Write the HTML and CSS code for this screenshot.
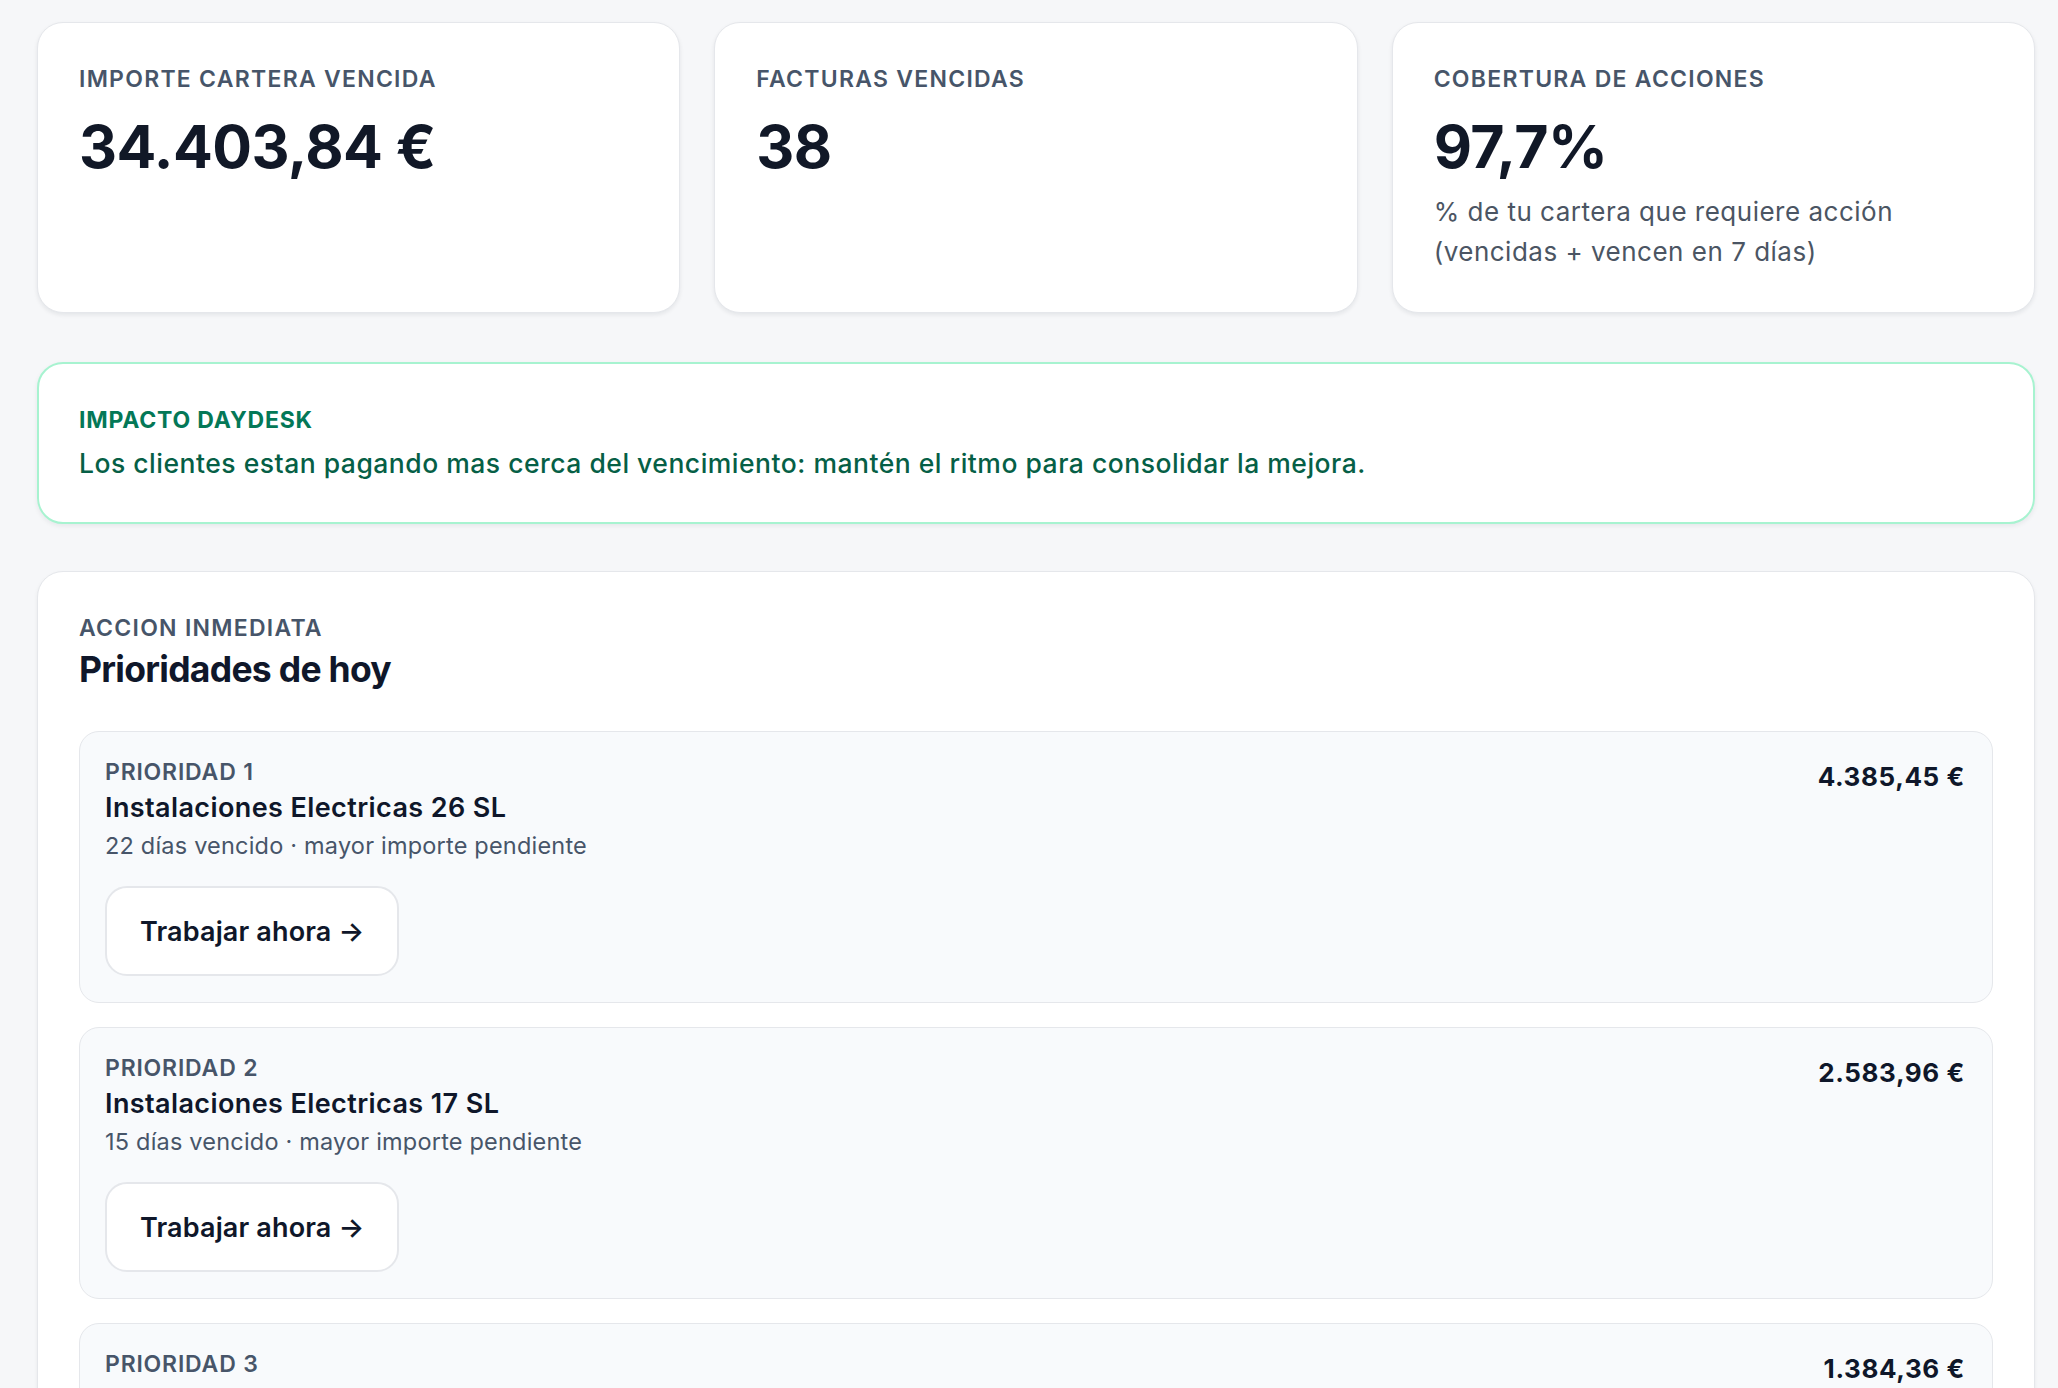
FILE: index.html
```html
<!DOCTYPE html>
<html lang="es">
<head>
<meta charset="utf-8">
<title>Cartera</title>
<link rel="stylesheet" href="styles.css">
</head>
<body>
<main class="page">
  <section class="stats">
    <div class="stat-card">
      <div class="label">Importe cartera vencida</div>
      <div class="value">34.403,84 €</div>
    </div>
    <div class="stat-card">
      <div class="label">Facturas vencidas</div>
      <div class="value">38</div>
    </div>
    <div class="stat-card">
      <div class="label">Cobertura de acciones</div>
      <div class="value">97,7%</div>
      <p class="desc">% de tu cartera que requiere acción<br>(vencidas + vencen en 7 días)</p>
    </div>
  </section>

  <section class="impact">
    <div class="impact-label">Impacto Daydesk</div>
    <p class="impact-text">Los clientes estan pagando mas cerca del vencimiento: mantén el ritmo para consolidar la mejora.</p>
  </section>

  <section class="panel">
    <div class="label">Accion inmediata</div>
    <h2 class="panel-title">Prioridades de hoy</h2>
    <div class="list">
      <article class="item">
        <div class="item-main">
          <div class="item-label">Prioridad 1</div>
          <div class="item-name">Instalaciones Electricas 26 SL</div>
          <div class="item-sub">22 días vencido · mayor importe pendiente</div>
          <button class="btn">Trabajar ahora →</button>
        </div>
        <div class="amount">4.385,45 €</div>
      </article>
      <article class="item">
        <div class="item-main">
          <div class="item-label">Prioridad 2</div>
          <div class="item-name">Instalaciones Electricas 17 SL</div>
          <div class="item-sub">15 días vencido · mayor importe pendiente</div>
          <button class="btn">Trabajar ahora →</button>
        </div>
        <div class="amount">2.583,96 €</div>
      </article>
      <article class="item">
        <div class="item-main">
          <div class="item-label">Prioridad 3</div>
          <div class="item-name">Instalaciones Electricas 12 SL</div>
          <div class="item-sub">9 días vencido · mayor importe pendiente</div>
          <button class="btn">Trabajar ahora →</button>
        </div>
        <div class="amount">1.384,36 €</div>
      </article>
    </div>
  </section>
</main>
</body>
</html>
```

FILE: styles.css
```css
* { box-sizing: border-box; }

body {
  margin: 0;
  background: #f6f7f9;
  font-family: Inter, "Noto Sans", "Liberation Sans", sans-serif;
  color: #0f172a;
}

.page {
  padding: 22px 23px 60px 37px;
  display: flex;
  flex-direction: column;
}

.stats {
  display: grid;
  grid-template-columns: repeat(3, 1fr);
  gap: 34px;
}

.stat-card {
  background: #ffffff;
  border: 1.5px solid #e5e7eb;
  border-radius: 26px;
  padding: 42px 41px 40px;
  box-shadow: 0 2px 4px rgba(15, 23, 42, 0.08);
}

.label {
  font-size: 23px;
  font-weight: 600;
  letter-spacing: 0.055em;
  text-transform: uppercase;
  color: #475569;
  line-height: 28px;
}

.value {
  margin-top: 18px;
  font-size: 59px;
  font-weight: 700;
  letter-spacing: -0.01em;
  line-height: 71px;
  color: #111827;
}

.desc {
  margin: 10px 0 0;
  font-size: 26px;
  line-height: 40px;
  letter-spacing: 0.5px;
  color: #4b5563;
}

.impact {
  margin-top: 49px;
  background: #ffffff;
  border: 2px solid #a7f3d0;
  border-radius: 26px;
  padding: 42px 40px 39px;
  box-shadow: 0 2px 5px rgba(15, 23, 42, 0.07);
}

.impact-label {
  font-size: 23px;
  font-weight: 700;
  letter-spacing: 0.035em;
  text-transform: uppercase;
  color: #047857;
  line-height: 28px;
}

.impact-text {
  margin: 10px 0 0;
  font-size: 26.5px;
  font-weight: 500;
  letter-spacing: 0.5px;
  line-height: 39px;
  color: #065f46;
}

.panel {
  margin-top: 47px;
  background: #ffffff;
  border: 1.5px solid #e5e7eb;
  border-radius: 26px;
  padding: 42px 41px 41px;
  box-shadow: 0 2px 4px rgba(15, 23, 42, 0.06);
}

.panel-title {
  margin: 6px 0 0;
  font-size: 35.5px;
  font-weight: 700;
  letter-spacing: -0.02em;
  line-height: 44px;
  color: #0f172a;
}

.list {
  margin-top: 39px;
  display: flex;
  flex-direction: column;
  gap: 24px;
}

.item {
  display: flex;
  justify-content: space-between;
  align-items: flex-start;
  background: #f8fafc;
  border: 1.5px solid #e5e7eb;
  border-radius: 20px;
  padding: 26px 27px 26px 25px;
}

.item-main {
  display: flex;
  flex-direction: column;
  align-items: flex-start;
}

.item-label {
  font-size: 23px;
  font-weight: 600;
  letter-spacing: 0.035em;
  text-transform: uppercase;
  color: #475569;
  line-height: 28px;
}

.item-name {
  margin-top: 5px;
  font-size: 27px;
  font-weight: 600;
  letter-spacing: 0.4px;
  line-height: 33px;
  color: #0f172a;
}

.item-sub {
  margin-top: 4px;
  font-size: 23.5px;
  letter-spacing: 0.2px;
  line-height: 35px;
  color: #475569;
}

.btn {
  margin-top: 23px;
  height: 90px;
  padding: 0 33px;
  background: #ffffff;
  border: 2px solid #e5e7eb;
  border-radius: 22px;
  font-family: inherit;
  font-size: 27px;
  font-weight: 600;
  letter-spacing: 0.15px;
  color: #0f172a;
  cursor: pointer;
}

.amount {
  margin-top: 3px;
  font-size: 26px;
  font-weight: 700;
  letter-spacing: 0.6px;
  line-height: 32px;
  color: #0f172a;
}
```
